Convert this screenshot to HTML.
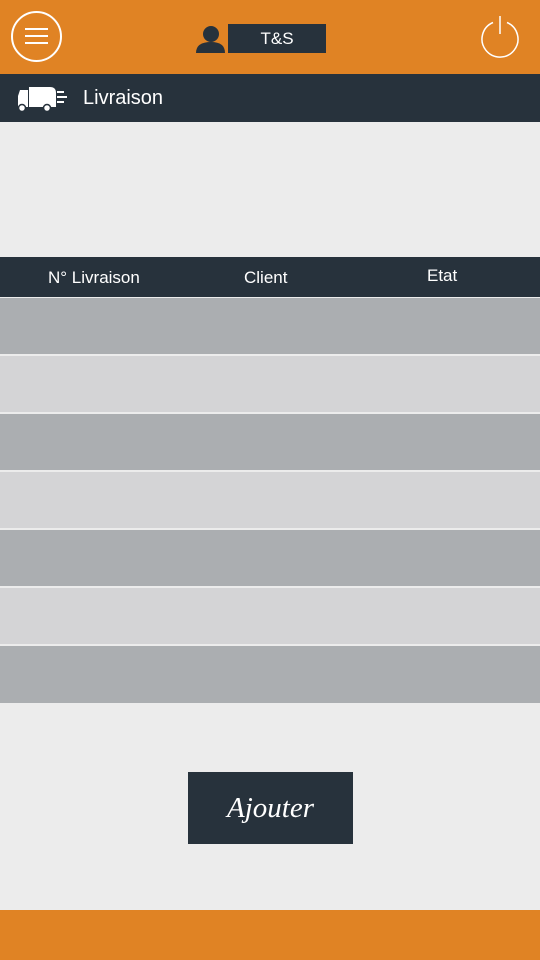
<!DOCTYPE html><html><head><style>
body{margin:0;width:540px;height:960px;background:#ececec;font-family:"Liberation Sans",sans-serif;position:relative;overflow:hidden}
.a{position:absolute}
.r{position:absolute;left:0;width:540px;height:56px}
.d{background:#abaeb1}.l{background:#d4d4d6}
</style></head><body>
<div class="a" style="left:0;top:0;width:540px;height:74px;background:#e08324"></div>
<div class="a" style="left:11px;top:11px;width:47px;height:47px;border:2px solid #fff;border-radius:50%"></div>
<div class="a" style="left:25px;top:28px;width:23px;height:2px;background:#fff;box-shadow:0 7px #fff,0 14px #fff"></div>
<svg class="a" style="left:190px;top:22px" width="36" height="32"><circle cx="21" cy="12" r="8" fill="#27323c"/><path d="M6 31 Q6 20 21 20 Q35 20 35 31Z" fill="#27323c"/></svg>
<div class="a" style="left:228px;top:24px;width:98px;height:29px;background:#27323c;color:#fff;font-size:17px;text-align:center;line-height:29px">T&amp;S</div>
<svg class="a" style="left:476px;top:13px" width="48" height="48"><path d="M17 9.5 A18 18 0 1 0 31 9.5" fill="none" stroke="#fff" stroke-width="1.5"/><line x1="24" y1="3" x2="24" y2="21" stroke="#fff" stroke-width="1.5"/></svg>
<div class="a" style="left:0;top:74px;width:540px;height:48px;background:#27323c"></div>
<svg class="a" style="left:16px;top:85px" width="52" height="28"><path d="M4 5 H12 V22 H2 V11Z" fill="#fff"/><path d="M13 2 H34 Q40 2 40 8 V22 H13Z" fill="#fff"/><circle cx="6" cy="23" r="3.5" fill="#fff" stroke="#27323c" stroke-width="1.5"/><circle cx="31" cy="23" r="3.5" fill="#fff" stroke="#27323c" stroke-width="1.5"/><rect x="41" y="6" width="7" height="2" fill="#fff"/><rect x="41" y="11" width="10" height="2" fill="#fff"/><rect x="41" y="16" width="7" height="2" fill="#fff"/></svg>
<div class="a" style="left:83px;top:87px;color:#fff;font-size:20px">Livraison</div>
<div class="a" style="left:0;top:257px;width:540px;height:40px;background:#27323c;color:#fff;font-size:17px">
<span class="a" style="left:48px;top:11px">N° Livraison</span><span class="a" style="left:244px;top:11px">Client</span><span class="a" style="left:427px;top:9px">Etat</span></div>
<div class="r d" style="top:298px"></div>
<div class="r l" style="top:356px"></div>
<div class="r d" style="top:414px"></div>
<div class="r l" style="top:472px"></div>
<div class="r d" style="top:530px"></div>
<div class="r l" style="top:588px"></div>
<div class="r d" style="top:646px;height:57px"></div>
<div class="a" style="left:188px;top:772px;width:165px;height:72px;background:#27323c;color:#fff;font-family:'Liberation Serif',serif;font-style:italic;font-size:29px;text-align:center;line-height:72px">Ajouter</div>
<div class="a" style="left:0;top:910px;width:540px;height:50px;background:#e08324"></div>
</body></html>
